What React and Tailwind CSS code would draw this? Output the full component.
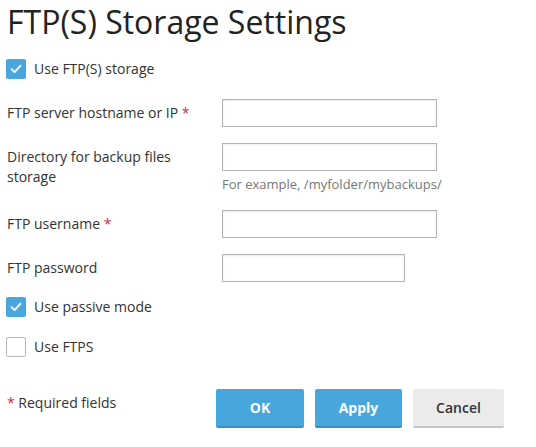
import React, { useState } from 'react';

const Req = () => <span className="text-[#c2334d]"> *</span>;

const Check = ({ checked, onChange, label }) => (
    <label className="flex items-center gap-[8px] cursor-pointer select-none">
        <span
            onClick={onChange}
            className={`w-[20px] h-[20px] rounded-[2px] flex items-center justify-center ${checked ? 'bg-[#4ba6dd]' : 'bg-white border border-[#b8b8b8]'}`}
        >
            {checked && (
                <svg width="12" height="10" viewBox="0 0 12 10" fill="none">
                    <path d="M1.5 5.2 L4.6 8.2 L10.5 1.6" stroke="white" strokeWidth="1.8" strokeLinecap="round" strokeLinejoin="round" />
                </svg>
            )}
        </span>
        <span className="text-[14px] leading-[20px] text-[#333]">{label}</span>
    </label>
);

const Row = ({ label, width = 'w-[215px]', hint, className = '', type = 'text' }) => (
    <div className={`flex items-start ${className}`}>
        <div className="w-[216px] pl-px pt-[4px] pr-[22px] text-[14px] leading-[20px] text-[#333]">{label}</div>
        <div className="flex flex-col">
            <input type={type} className={`${width} h-[28px] border border-[#b3b3b3] shadow-[inset_0_1px_2px_rgba(0,0,0,0.08)] px-2 text-[13px] outline-none`} />
            {hint && <div className="text-[13px] leading-[16px] text-[#777] mt-[5px]">{hint}</div>}
        </div>
    </div>
);

export default function App() {
    const [ftp, setFtp] = useState(true);
    const [passive, setPassive] = useState(true);
    const [ftps, setFtps] = useState(false);

    return (
        <div className="w-[536px] h-[447px] bg-white pl-[6px] font-['Open_Sans',sans-serif] overflow-hidden">
            <h1 className="text-[32px] leading-[44px] text-[#222] pl-px">FTP(S) Storage Settings</h1>

            <div className="mt-[15px]">
                <Check checked={ftp} onChange={() => setFtp(!ftp)} label="Use FTP(S) storage" />
            </div>

            <Row className="mt-[20px]" label={<>FTP server hostname or IP<Req /></>} />
            <Row className="mt-[16px]" label="Directory for backup files storage" hint="For example, /myfolder/mybackups/" />
            <Row className="mt-[18px]" label={<>FTP username<Req /></>} />
            <Row className="mt-[16px]" label="FTP password" width="w-[183px]" type="password" />

            <div className="mt-[15px]">
                <Check checked={passive} onChange={() => setPassive(!passive)} label="Use passive mode" />
            </div>
            <div className="mt-[20px]">
                <Check checked={ftps} onChange={() => setFtps(!ftps)} label="Use FTPS" />
            </div>

            <div className="flex items-start mt-[32px]">
                <div className="w-[210px] pl-px pt-[4px] text-[14px] leading-[20px] text-[#333]">
                    <span className="text-[#c2334d]">*</span> Required fields
                </div>
                <div className="flex gap-[11px]">
                    <button className="w-[88px] h-[39px] bg-[#47a7dc] border-b-2 border-[#3a8ec0] rounded-[2px] text-white text-[14px] font-bold">OK</button>
                    <button className="w-[87px] h-[39px] bg-[#47a7dc] border-b-2 border-[#3a8ec0] rounded-[2px] text-white text-[14px] font-bold">Apply</button>
                    <button className="w-[91px] h-[39px] bg-[#ebebeb] border-b-2 border-[#c6c6c6] rounded-[2px] text-[#333] text-[14px] font-semibold">Cancel</button>
                </div>
            </div>
        </div>
    );
}
